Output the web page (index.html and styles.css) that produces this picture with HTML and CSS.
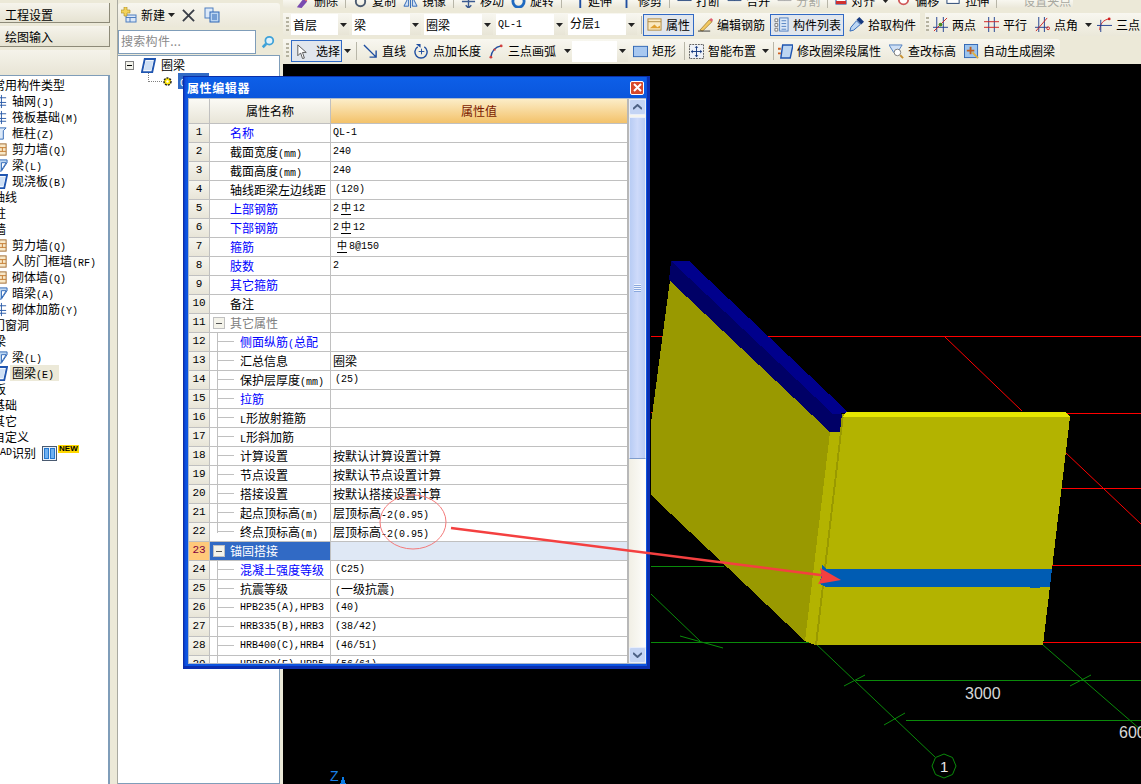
FILE: index.html
```html
<!DOCTYPE html>
<html lang="zh">
<head>
<meta charset="utf-8">
<title>属性编辑器</title>
<link rel="stylesheet" href="styles.css">
</head>
<body>
<svg class="defs" width="0" height="0">
  <symbol id="i-para" viewBox="0 0 16 16"><path d="M4 1h11l-3 14H1z" fill="#fff" stroke="#1f55b0" stroke-width="2"/><path d="M5 3h8l-2 10H3z" fill="#cfe0f5"/></symbol>
  <symbol id="i-beam" viewBox="0 0 16 16"><path d="M1 6l5-4h9v3l-6 9H2z" fill="#bcd6f2" stroke="#2f66b5"/><path d="M9 5l5 0-5 8z" fill="#fff" stroke="#2f66b5"/></symbol>
  <symbol id="i-wall" viewBox="0 0 16 16"><rect x="1" y="2" width="13" height="12" fill="#f8e8c8" stroke="#a06a30"/><path d="M1 6h13M1 10h13M7 2v4M10 6v4M6 10v4" stroke="#c47b30"/></symbol>
  <symbol id="i-grid" viewBox="0 0 16 16"><path d="M4 1v14M9 1v14M1 4h13M1 9h13M1 12h13" stroke="#2a5aa8" fill="none"/></symbol>
  <symbol id="i-col" viewBox="0 0 16 16"><path d="M1 2h13l-3 3v9H5V5z" fill="#dce9f8" stroke="#2f66b5"/></symbol>
  <symbol id="i-down" viewBox="0 0 7 4"><path d="M0 0h7L3.500 4z" fill="#222"/></symbol>
</svg>

<div class="page">
  <aside class="nav">
    <div class="nav-btn first">工程设置</div>
    <div class="nav-btn">绘图输入</div>
    <div class="nav-head"></div>
    <div class="nav-tree">
      <div class="cat">常用构件类型</div>
      <div class="leaf"><svg class="ti"><use href="#i-grid"/></svg>轴网<span class="m">(J)</span></div>
      <div class="leaf"><svg class="ti"><use href="#i-grid"/></svg>筏板基础<span class="m">(M)</span></div>
      <div class="leaf"><svg class="ti"><use href="#i-col"/></svg>框柱<span class="m">(Z)</span></div>
      <div class="leaf"><svg class="ti"><use href="#i-wall"/></svg>剪力墙<span class="m">(Q)</span></div>
      <div class="leaf"><svg class="ti"><use href="#i-beam"/></svg>梁<span class="m">(L)</span></div>
      <div class="leaf"><svg class="ti"><use href="#i-para"/></svg>现浇板<span class="m">(B)</span></div>
      <div class="cat">轴线</div>
      <div class="cat c2">柱</div>
      <div class="cat c2">墙</div>
      <div class="leaf"><svg class="ti"><use href="#i-wall"/></svg>剪力墙<span class="m">(Q)</span></div>
      <div class="leaf"><svg class="ti"><use href="#i-wall"/></svg>人防门框墙<span class="m">(RF)</span></div>
      <div class="leaf"><svg class="ti"><use href="#i-wall"/></svg>砌体墙<span class="m">(Q)</span></div>
      <div class="leaf"><svg class="ti"><use href="#i-beam"/></svg>暗梁<span class="m">(A)</span></div>
      <div class="leaf"><svg class="ti"><use href="#i-grid"/></svg>砌体加筋<span class="m">(Y)</span></div>
      <div class="cat">门窗洞</div>
      <div class="cat c2">梁</div>
      <div class="leaf"><svg class="ti"><use href="#i-beam"/></svg>梁<span class="m">(L)</span></div>
      <div class="leaf lit"><svg class="ti"><use href="#i-para"/></svg>圈梁<span class="m">(E)</span></div>
      <div class="cat c2">板</div>
      <div class="cat">基础</div>
      <div class="cat">其它</div>
      <div class="cat">自定义</div>
      <div class="cat cad"><span class="m">CAD</span>识别<svg class="cad-ic" viewBox="0 0 15 15"><rect x=".5" y=".5" width="14" height="14" fill="#e8f0fa" stroke="#4a5a70"/><rect x="2.500" y="2.500" width="4" height="10" fill="#6fb0f0" stroke="#2478d0"/><rect x="8.500" y="2.500" width="4" height="10" fill="#6fb0f0" stroke="#2478d0"/></svg><span class="new">NEW</span></div>
    </div>
  </aside>

  <section class="comp">
    <div class="comp-bar">
      <svg class="ic" viewBox="0 0 16 16"><rect x="5" y="8" width="10" height="7" fill="#dbe7f7" stroke="#4f7fc0"/><path d="M5 10.500h10M9 10.500V15" stroke="#4f7fc0"/><path d="M3 0h3v3h3v3H6v3H3V6H0V3h3z" fill="#f3d25a" stroke="#a88a20" stroke-width=".6"/></svg>
      <span>新建</span><svg class="caret"><use href="#i-down"/></svg>
      <svg class="ic x" viewBox="0 0 14 14"><path d="M1 1l12 12M13 1L1 13" stroke="#3a3f48" stroke-width="2"/></svg>
      <svg class="ic cp" viewBox="0 0 16 16"><rect x="1" y="1" width="8" height="10" fill="#dce9f8" stroke="#4f7fc0"/><rect x="6" y="5" width="9" height="10" fill="#bcd6f2" stroke="#2f66b5"/><path d="M8 8h5M8 10h5M8 12h5" stroke="#2f66b5"/></svg>
    </div>
    <div class="search-row">
      <div class="search">搜索构件...</div>
      <div class="search-btn"><svg viewBox="0 0 16 16"><circle cx="9.500" cy="6.500" r="4.500" fill="#e0f2fb" stroke="#3fa2d8" stroke-width="2"/><path d="M6 10l-4 4" stroke="#3fa2d8" stroke-width="3"/></svg></div>
    </div>
    <div class="comp-tree">
      <div class="node"><span class="toggle"></span><svg class="tn"><use href="#i-para"/></svg>圈梁</div>
      <div class="node sub">
        <span class="dots"></span>
        <svg class="gear" viewBox="0 0 11 11"><circle cx="5.500" cy="5.500" r="3.500" fill="#ffe600" stroke="#222" stroke-width="1.500" stroke-dasharray="2 1"/><circle cx="5.500" cy="5.500" r="1.200" fill="#fff"/></svg>
        <span class="sel"><span class="m">QL-1</span></span>
      </div>
    </div>
  </section>

  <main class="work">
    <div class="bar bar-top">
      <div class="bar-in">
        <span class="t"><svg class="ic" viewBox="0 0 16 16"><path d="M2 14l7-9 4 3-6 7z" fill="#7a4bb0"/><path d="M9 5l3-4 3 3-3 4z" fill="#e25c6a"/></svg>删除</span><i class="sep"></i>
        <span class="t"><svg class="ic" viewBox="0 0 16 16"><circle cx="8" cy="8" r="5" fill="none" stroke="#4a5a70" stroke-width="2"/></svg>复制</span>
        <span class="t"><svg class="ic" viewBox="0 0 16 16"><path d="M8 1v14M6 3L1 13h5zM10 3l5 10h-5z" fill="#cfe0f5" stroke="#2f66b5"/></svg>镜像</span><i class="sep"></i>
        <span class="t"><svg class="ic" viewBox="0 0 16 16"><path d="M8 1v14M5 12l3 3 3-3M1 8h14" fill="none" stroke="#3a5a90" stroke-width="1.500"/></svg>移动</span>
        <span class="t"><svg class="ic" viewBox="0 0 16 16"><circle cx="8" cy="8" r="6" fill="none" stroke="#1f6ac0" stroke-width="3"/></svg>旋转</span><i class="sep"></i>
        <span class="t"><svg class="ic" viewBox="0 0 16 16"><path d="M1 4h9M12 1v14" fill="none" stroke="#1f4ea0" stroke-width="2"/></svg>延伸</span>
        <span class="t"><svg class="ic" viewBox="0 0 16 16"><path d="M1 4h14M8 1v14" fill="none" stroke="#1f4ea0" stroke-width="2"/></svg>修剪</span><i class="sep"></i>
        <span class="t"><svg class="ic" viewBox="0 0 16 16"><rect x="1" y="1" width="14" height="6" fill="#dce9f8" stroke="#2f4e80"/></svg>打断</span>
        <span class="t"><svg class="ic" viewBox="0 0 16 16"><path d="M1 1h14v6H1zM8 1v6" fill="#dce9f8" stroke="#2f4e80"/></svg>合并</span>
        <span class="t dim"><svg class="ic" viewBox="0 0 16 16"><path d="M1 1h14v6H1zM8 1v6" fill="#eee" stroke="#aaa"/></svg>分割</span><i class="sep"></i>
        <span class="t"><svg class="ic sm" viewBox="0 0 12 12"><rect x="1" y="1" width="10" height="8" fill="#fff" stroke="#1f3f90"/><rect x="1" y="6" width="10" height="3" fill="#d03030"/></svg>对齐</span><svg class="caret"><use href="#i-down"/></svg>
        <span class="t"><svg class="ic" viewBox="0 0 16 16"><circle cx="8" cy="6" r="5" fill="#fff" stroke="#d05a5a" stroke-width="2"/></svg>偏移</span>
        <span class="t"><svg class="ic" viewBox="0 0 16 16"><rect x="1" y="1" width="13" height="9" fill="#fff" stroke="#1f3f70"/></svg>拉伸</span><i class="sep"></i>
        <span class="t dim"><svg class="ic" viewBox="0 0 16 16"><path d="M1 5h14" stroke="#aaa" stroke-dasharray="2 1"/></svg>设置夹点</span>
      </div>
    </div>

    <div class="bars">
      <div class="bar bar-mid">
        <i class="grip"></i>
        <div class="combo c-first"><span>首层</span><b><svg class="caret"><use href="#i-down"/></svg></b></div>
        <div class="combo"><span>梁</span><b><svg class="caret"><use href="#i-down"/></svg></b></div>
        <div class="combo"><span>圈梁</span><b><svg class="caret"><use href="#i-down"/></svg></b></div>
        <div class="combo"><span class="m">QL-1</span><b><svg class="caret"><use href="#i-down"/></svg></b></div>
        <div class="combo"><span>分层<span class="m">1</span></span><b><svg class="caret"><use href="#i-down"/></svg></b></div>
        <i class="sep s-a"></i>
        <span class="t on attr"><svg class="ic" viewBox="0 0 16 16"><rect x="1" y="2" width="14" height="12" fill="#fbe9c0" stroke="#b08a40"/><path d="M1 5h14" stroke="#b08a40"/><path d="M3 12l5-4 3 3 3-2v3H3z" fill="#e0a030"/></svg>属性</span>
        <span class="t edit"><svg class="ic" viewBox="0 0 16 16"><path d="M2 14L12 3l3 2-10 10z" fill="#f3c860" stroke="#8a6a20" stroke-width=".7"/><path d="M12 3l2-2 2 2-1 2z" fill="#e06070"/><path d="M0 15h13" stroke="#333"/></svg>编辑钢筋</span>
        <span class="t on list"><svg class="ic" viewBox="0 0 16 16"><rect x="6" y="1" width="9" height="14" fill="#dce9f8" stroke="#4f7fc0"/><path d="M8 4h5M8 7h5M8 10h5M8 13h5" stroke="#4f7fc0"/><path d="M1 2h3v3H1zM1 7h3v3H1zM1 12h3v3H1z" fill="#fff" stroke="#777"/></svg>构件列表</span>
        <span class="t pick"><svg class="ic" viewBox="0 0 16 16"><path d="M1 15l1-4 6-7 4 4-7 6z" fill="#bcd6f2" stroke="#2f66b5"/><path d="M8 3l3-3 5 5-3 3z" fill="#163a80"/></svg>拾取构件</span>
        <div class="bar-break"></div>
        <i class="grip g2"></i>
        <span class="t draw"><svg class="ic" viewBox="0 0 16 16"><path d="M4 0v16M11 0v16M0 11h16" stroke="#1f3f90" fill="none"/><path d="M1 15L15 1" stroke="#d02020"/><circle cx="8" cy="8" r="2" fill="#4a8a20"/></svg>两点</span>
        <span class="t draw"><svg class="ic" viewBox="0 0 16 16"><path d="M5 0v16M11 0v16" stroke="#1f3f90" fill="none"/><path d="M0 5h16M0 11h16" stroke="#d02020"/></svg>平行</span>
        <span class="t draw"><svg class="ic" viewBox="0 0 16 16"><path d="M4 0v16M10 0v16M0 11h14" stroke="#1f3f90" fill="none"/><path d="M1 15L13 1" stroke="#d02020"/><circle cx="14" cy="12" r="1.500" fill="none" stroke="#d02020"/></svg>点角</span><svg class="caret c-an"><use href="#i-down"/></svg>
        <span class="t draw d3"><svg class="ic" viewBox="0 0 16 16"><path d="M3 14C3 7 7 3 13 2" stroke="#d02020" fill="none"/><path d="M0 9h16M4 3v13" stroke="#1f3f90" fill="none"/><circle cx="13" cy="2" r="1.500" fill="#d02020"/></svg>三点</span>
      </div>

      <div class="bar bar-low">
        <i class="grip"></i>
        <span class="t on choose"><svg class="ic" viewBox="0 0 16 16"><path d="M3 1l9 8H8l2 6-2 .500-2-6-3 3z" fill="#fff" stroke="#555"/></svg>选择</span><svg class="caret c-b"><use href="#i-down"/></svg><i class="sep s-b"></i>
        <span class="t"><svg class="ic" viewBox="0 0 16 16"><path d="M1 1l13 13M14 7v7H7" fill="none" stroke="#1f4ea0" stroke-width="1.500"/></svg>直线</span>
        <span class="t"><svg class="ic" viewBox="0 0 16 16"><path d="M4 3a6.500 6.500 0 1 0 7 0" fill="none" stroke="#1f4ea0" stroke-width="1.500"/><path d="M5 8h6M8 5v6" stroke="#1f4ea0"/><path d="M2 0h5v4z" fill="#1f4ea0"/></svg>点加长度</span>
        <span class="t"><svg class="ic" viewBox="0 0 16 16"><path d="M2 14C3 7 7 3 13 2" stroke="#1f4ea0" stroke-width="1.500" fill="none"/><circle cx="2" cy="14" r="1.500" fill="#d04040"/><circle cx="13" cy="2" r="1.500" fill="#d04040"/><circle cx="6" cy="6" r="1.200" fill="#d04040"/></svg>三点画弧</span><svg class="caret c-c"><use href="#i-down"/></svg>
        <div class="combo c-empty"><span></span><b><svg class="caret"><use href="#i-down"/></svg></b></div>
        <span class="t rect"><svg class="ic" viewBox="0 0 16 16"><rect x=".5" y="2.500" width="15" height="11" fill="#a8c8f0" stroke="#2f66b5"/></svg>矩形</span><i class="sep s-d"></i>
        <span class="t smart"><svg class="ic" viewBox="0 0 16 16"><rect x=".5" y=".5" width="15" height="15" fill="#eef2f8" stroke="#555" stroke-dasharray="2 1"/><path d="M8 3v10M3 8h10" stroke="#163a80"/><path d="M8 2l2 2H6zM8 14l2-2H6zM2 8l2-2v4zM14 8l-2-2v4z" fill="#163a80"/></svg>智能布置</span><svg class="caret c-e"><use href="#i-down"/></svg><i class="sep s-f"></i>
        <span class="t"><svg class="ic" viewBox="0 0 16 16"><path d="M5 1h11l-3 14H3z" fill="#bcd6f2" stroke="#1f55b0" stroke-width="1.500"/><path d="M0 4h3v2H0zM0 9h3v2H0z" fill="#d06020"/></svg>修改圈梁段属性</span>
        <span class="t"><svg class="ic" viewBox="0 0 16 16"><path d="M0 1h14L9 9H5z" fill="#cfe0f5" stroke="#4f7fc0"/><circle cx="9" cy="9" r="3.500" fill="#fff" stroke="#777"/><path d="M12 12l3 3" stroke="#c89030" stroke-width="2"/></svg>查改标高</span>
        <span class="t"><svg class="ic" viewBox="0 0 16 16"><rect x=".5" y=".5" width="14" height="14" fill="#9cc4ee" stroke="#2f66b5"/><path d="M7 3v8M3 7h8" stroke="#c06020" stroke-width="2"/><path d="M9 9l6 6" stroke="#e0b040" stroke-width="2"/></svg>自动生成圈梁</span>
      </div>
    </div>

    <svg class="scene" viewBox="283 64 858 720" shape-rendering="crispEdges">
      <g stroke="#f00" fill="none" shape-rendering="auto">
        <path d="M651 336.500H662M768 336.500H1141M651 412.500H656M1066 413.500H1141M945 337L1022 411M1066 453L1141 524M1061 488.500H1141M1052 565.500H1141M1043 642.500H1141"/>
      </g>
      <g stroke="#0a8a0a" fill="none" shape-rendering="auto">
        <path d="M651 566.500H724M651 642.500H815M651 594L700 641M680 636L723 648M815 643L935 757M1043 645L1141 730M856 680.500H1141M844 686L865 675M1070 686L1091 675M906 720.500H1141M884 725L905 713"/>
        <path d="M944 754l8.500 3.500 3.500 8.500-3.500 8.500-8.500 3.500-8.500-3.500-3.500-8.500 3.500-8.500z"/>
      </g>
      <polygon points="670,280 830,432 805,641 651,495 651,423" fill="#999900"/>
      <polygon points="830,432 840,432 815,645 805,641" fill="#b3b300"/>
      <polygon points="840,432 842,414 844,414 817,645 815,645" fill="#999900"/>
      <polygon points="671,261 669,280 830,432 840,432 842,414 833,414" fill="#000066"/>
      <polygon points="671,261 689,261 849,413 833,414" fill="#00008c"/>
      <polygon points="844,414 1070,417 1043,645 817,645" fill="#b3b300"/>
      <polygon points="846,412 1065,412 1070,417 843,417" fill="#e6e600"/>
      <polygon points="822,565 826,569 1052,569 1050,587 1030,588 1030,587 826,587 820,584" fill="#005cb3"/>
      <g class="dim-t">
        <text x="965" y="699">3000</text>
        <text x="1119" y="738">600</text>
        <text x="940" y="772" class="num">1</text>
      </g>
      <text x="330" y="781" class="zed">Z</text>
      <polygon points="343,776 346,784 340,784" fill="#0a7be6"/>
    </svg>
  </main>

  <div class="dlg">
    <div class="dlg-title"><span>属性编辑器</span><b class="close"><svg viewBox="0 0 9 9"><path d="M1 1l7 7M8 1L1 8" stroke="#fff" stroke-width="2"/></svg></b></div>
    <div class="dlg-body">
      <div class="grid">
        <div class="row head"><div class="idx"></div><div class="nm">属性名称</div><div class="val">属性值</div></div>
        <div class="row"><div class="idx">1</div><div class="nm blue">名称</div><div class="val m">QL-1</div></div>
        <div class="row"><div class="idx">2</div><div class="nm">截面宽度<span class="m">(mm)</span></div><div class="val m">240</div></div>
        <div class="row"><div class="idx">3</div><div class="nm">截面高度<span class="m">(mm)</span></div><div class="val m">240</div></div>
        <div class="row"><div class="idx">4</div><div class="nm">轴线距梁左边线距</div><div class="val m p">(120)</div></div>
        <div class="row"><div class="idx">5</div><div class="nm blue">上部钢筋</div><div class="val m">2<span class="rb">中</span>12</div></div>
        <div class="row"><div class="idx">6</div><div class="nm blue">下部钢筋</div><div class="val m">2<span class="rb">中</span>12</div></div>
        <div class="row"><div class="idx">7</div><div class="nm blue">箍筋</div><div class="val m p"><span class="rb">中</span>8@150</div></div>
        <div class="row"><div class="idx">8</div><div class="nm blue">肢数</div><div class="val m">2</div></div>
        <div class="row"><div class="idx">9</div><div class="nm blue">其它箍筋</div><div class="val"></div></div>
        <div class="row"><div class="idx">10</div><div class="nm">备注</div><div class="val"></div></div>
        <div class="row"><div class="idx">11</div><div class="nm gray"><span class="box"></span>其它属性</div><div class="val"></div></div>
        <div class="row"><div class="idx">12</div><div class="nm kid blue">侧面纵筋<span class="m">(</span>总配</div><div class="val"></div></div>
        <div class="row"><div class="idx">13</div><div class="nm kid">汇总信息</div><div class="val">圈梁</div></div>
        <div class="row"><div class="idx">14</div><div class="nm kid">保护层厚度<span class="m">(mm)</span></div><div class="val m p">(25)</div></div>
        <div class="row"><div class="idx">15</div><div class="nm kid blue">拉筋</div><div class="val"></div></div>
        <div class="row"><div class="idx">16</div><div class="nm kid"><span class="m">L</span>形放射箍筋</div><div class="val"></div></div>
        <div class="row"><div class="idx">17</div><div class="nm kid"><span class="m">L</span>形斜加筋</div><div class="val"></div></div>
        <div class="row"><div class="idx">18</div><div class="nm kid">计算设置</div><div class="val">按默认计算设置计算</div></div>
        <div class="row"><div class="idx">19</div><div class="nm kid">节点设置</div><div class="val">按默认节点设置计算</div></div>
        <div class="row"><div class="idx">20</div><div class="nm kid">搭接设置</div><div class="val">按默认搭接设置计算</div></div>
        <div class="row"><div class="idx">21</div><div class="nm kid">起点顶标高<span class="m">(m)</span></div><div class="val">层顶标高<span class="m">-2(0.95)</span></div></div>
        <div class="row"><div class="idx">22</div><div class="nm kid last">终点顶标高<span class="m">(m)</span></div><div class="val">层顶标高<span class="m">-2(0.95)</span></div></div>
        <div class="row cur"><div class="idx">23</div><div class="nm"><span class="box"></span>锚固搭接</div><div class="val"></div></div>
        <div class="row"><div class="idx">24</div><div class="nm kid blue">混凝土强度等级</div><div class="val m p">(C25)</div></div>
        <div class="row"><div class="idx">25</div><div class="nm kid">抗震等级</div><div class="val p"><span class="m">(</span>一级抗震<span class="m">)</span></div></div>
        <div class="row"><div class="idx">26</div><div class="nm kid m">HPB235(A),HPB3</div><div class="val m p">(40)</div></div>
        <div class="row"><div class="idx">27</div><div class="nm kid m">HRB335(B),HRB3</div><div class="val m p">(38/42)</div></div>
        <div class="row"><div class="idx">28</div><div class="nm kid m">HRB400(C),HRB4</div><div class="val m p">(46/51)</div></div>
        <div class="row"><div class="idx">29</div><div class="nm kid m">HRB500(E),HRB5</div><div class="val m p">(56/61)</div></div>
      </div>
      <div class="sb">
        <div class="sb-btn"><svg viewBox="0 0 9 6"><path d="M0 5l4.500-4 4.500 4" fill="none" stroke="#4d6185" stroke-width="2"/></svg></div>
        <div class="sb-thumb"><i></i></div>
        <div class="sb-track"></div>
        <div class="sb-btn"><svg viewBox="0 0 9 6"><path d="M0 1l4.500 4 4.500-4" fill="none" stroke="#4d6185" stroke-width="2"/></svg></div>
      </div>
    </div>
  </div>

  <svg class="marks" viewBox="0 0 1141 784">
    <ellipse cx="413" cy="522" rx="33" ry="27" fill="none" stroke="#f47a7a"/>
    <path d="M451 528L828 576" stroke="#f44040" stroke-width="2.500" fill="none"/>
    <path d="M841 580L820 568 822 577 818 584z" fill="#f44040"/>
  </svg>
</div>
</body>
</html>
```
FILE: styles.css
```css
* { box-sizing: border-box; }
html, body { margin: 0; padding: 0; }
body { background: #ece9d8; font: 12px/16px "Noto Sans CJK SC", "Noto Sans", sans-serif; color: #000; }
.defs { position: absolute; }
.m { font-family: "Liberation Mono", "Noto Sans CJK SC", monospace; font-size: 10px; }
.page { position: relative; width: 1141px; height: 784px; overflow: hidden; display: flex; background: #ece9d8; }

/* left nav */
.nav { width: 110px; flex: none; display: flex; flex-direction: column; }
.nav-btn { height: 21px; margin-bottom: 3px; padding-left: 5px; line-height: 22px; font-size: 12px; background: linear-gradient(#f6f4ec, #e6e3d2); border-right: 1px solid #8d8a78; border-bottom: 1px solid #8d8a78; }
.nav-btn.first { margin-top: 3px; height: 20px; line-height: 23px; }
.nav-head { height: 25px; flex: none; background: linear-gradient(#f5f3ea, #e8e5d6); }
.nav-tree { flex: 1; padding-top: 1px; background: #fff; border-top: 1px solid #7f9db9; border-right: 2px solid #7f9db9; overflow: hidden; }
.cat, .leaf { height: 16px; line-height: 16px; white-space: nowrap; }
.cat { margin-left: -7px; }
.cat.c2 { margin-left: -6px; }
.cat.cad { margin-left: -6px; display: flex; align-items: center; }
.leaf { margin-left: -7px; }
.ti { width: 15px; height: 15px; margin-right: 4px; vertical-align: -3px; }
.lit { background: linear-gradient(#ece9d8, #ece9d8) 17px 0 / 49px 100% no-repeat; }
.cad-ic { width: 15px; height: 15px; margin-left: 6px; flex: none; }
.new { background: #ffd800; font: bold 8px/7px "Liberation Sans", sans-serif; height: 8px; padding: 0 1px; margin: -8px 0 0 1px; }

/* component panel */
.comp { width: 166px; flex: none; margin-left: 7px; display: flex; flex-direction: column; padding-right: 3px; border-left: 1px solid #a9a9a0; }
.comp-bar { height: 24px; margin: 3px 0; flex: none; display: flex; align-items: center; padding-left: 3px; background: linear-gradient(#f7f6ef, #ebe8d9); border-radius: 3px; }
.comp-bar .ic { width: 16px; height: 16px; flex: none; }
.comp-bar span { margin-left: 4px; }
.caret { width: 7px; height: 4px; flex: none; }
.comp-bar .caret { margin-left: 3px; }
.comp-bar .x { width: 13px; height: 13px; margin-left: 7px; }
.comp-bar .cp { margin-left: 9px; }
.search-row { height: 25px; flex: none; display: flex; align-items: flex-start; background: #ece9d8; }
.search { width: 138px; height: 24px; background: #fff; border: 1px solid #7f9db9; color: #8a8a8a; line-height: 19px; padding-left: 2px; letter-spacing: .3px; }
.search-btn { width: 14px; height: 14px; margin: 5px 0 0 5px; }
.search-btn svg { display: block; width: 14px; height: 14px; }
.comp-tree { flex: 1; background: #fff; border: 1px solid #7f9db9; border-left: 0; position: relative; }
.node { height: 16px; display: flex; align-items: center; margin-top: 1px; padding-left: 7px; }
.toggle { width: 9px; height: 9px; flex: none; border: 1px solid #808080; background: linear-gradient(#000, #000) center / 5px 1px no-repeat, #f2f2ea; }
.tn { width: 15px; height: 15px; flex: none; margin: 0 5px 0 7px; }
.node.sub { margin-top: 0; padding-left: 30px; }
.dots { width: 14px; height: 9px; flex: none; margin-top: -8px; border-left: 1px dotted #808080; border-bottom: 1px dotted #808080; }
.gear { width: 11px; height: 11px; flex: none; }
.sel { width: 31px; height: 16px; flex: none; margin-left: 5px; background: #316ac5; color: #fff; padding-left: 2px; }

/* work area */
.work { flex: 1; min-width: 0; display: flex; flex-direction: column; }
.bar { display: flex; align-items: center; background: linear-gradient(#f8f7f0, #ebe8d9); }
.bar-top { width: 790px; height: 8px; overflow: hidden; align-items: flex-start; border-radius: 0 0 3px 3px; }
.bar-in { display: flex; align-items: center; height: 16px; margin-top: -7px; padding-left: 12px; gap: 7px; white-space: nowrap; }
.t { display: flex; align-items: center; gap: 4px; white-space: nowrap; flex: none; }
.t .ic { width: 15px; height: 15px; flex: none; }
.t .ic.sm { width: 12px; height: 12px; }
.dim { color: #a8a8a0; }
.sep { width: 1px; height: 18px; background: #b8b6a8; flex: none; }
.bars { display: flex; flex-direction: column; gap: 3px; margin-top: 5px; }
.bar-mid { height: 23px; padding-left: 3px; }
.bar-low { height: 24px; padding-left: 3px; gap: 8px; width: 777px; border-radius: 0 3px 3px 0; }
.grip { width: 3px; height: 16px; flex: none; background: repeating-linear-gradient(#b5b2a0 0 2px, transparent 2px 4px); }
.combo { width: 69px; height: 21px; margin-left: 3px; background: #fff; display: flex; flex: none; align-items: center; justify-content: space-between; padding-left: 2px; font-size: 12px; }
.combo b { width: 11px; height: 21px; background: linear-gradient(#f7f6ef, #e8e5d6); display: flex; align-items: center; justify-content: center; font-weight: normal; }
.c-first { width: 58px; margin-left: 2px; }
.c-empty { width: 56px; margin-left: 0; }
.s-a { margin-left: 4px; margin-right: 1px; }
.on { background: #e1e6ed; border: 1px solid #316ac5; height: 22px; }
.attr { width: 51px; padding-left: 3px; }
.edit { margin-left: 4px; width: 71px; }
.list { margin-left: 1px; width: 74px; padding-left: 3px; }
.pick { margin-left: 5px; width: 68px; }
.bar-break { width: 5px; height: 23px; background: #ece9d8; margin-left: 3px; flex: none; }
.g2 { margin-left: 1px; }
.draw { margin-left: 8px; }
.g2 + .draw { margin-left: 4px; }
.c-an { margin-left: 7px; }
.d3 { margin-left: 5px; }
.choose { width: 51px; gap: 6px; padding-left: 3px; margin-left: -6px; margin-right: -6px; }
.c-b { margin-left: 0; margin-right: -3px; }
.s-b { margin-right: -2px; }
.c-c { margin-left: 0; margin-right: -7px; }
.rect { margin-left: -3px; }
.s-d { margin-left: 0; margin-right: -4px; }
.c-e { margin-left: -2px; }
.s-f { margin-left: -4px; margin-right: -4px; }
.scene { flex: none; width: 858px; height: 720px; background: #000; margin-top: 1px; display: block; }
.dim-t text { fill: #d8d8d8; font: 16px "Liberation Sans", sans-serif; }
.dim-t text.num { fill: #e8e8e8; font-size: 15px; }
.zed { fill: #1a80e8; font: 14px "Liberation Sans", sans-serif; }

/* dialog */
.dlg { position: absolute; left: 183px; top: 76px; width: 467px; height: 593px; background: linear-gradient(90deg, #0a39c8, #0d54e0 2px, #0d54e0 100%); border: 1px solid #0a2fa8; border-right: 3px solid #0a2fb0; border-bottom: 3px solid #0a2fb0; display: flex; flex-direction: column; padding: 0 1px 2px 4px; }
.dlg-title { height: 21px; flex: none; display: flex; align-items: center; justify-content: space-between; color: #fff; font-weight: bold; padding: 0 2px 0 0; background: linear-gradient(#0d5fe8, #0a56dc); }
.dlg-title span { letter-spacing: .6px; margin-left: -1px; }
.close { width: 14px; height: 14px; background: #d8492a; border: 1px solid #fff; border-radius: 2px; display: flex; align-items: center; justify-content: center; }
.close svg { width: 9px; height: 9px; }
.dlg-body { flex: 1; min-height: 0; display: flex; background: #fff; border: 1px solid #aeb9c8; border-right: 0; }
.grid { width: 440px; flex: none; overflow: hidden; border-right: 2px solid #b8b8b8; }
.row { display: grid; grid-template-columns: 21px 121px 1fr; height: 19px; line-height: 17px; border-bottom: 1px solid #c0c0c0; }
.row > div { border-right: 1px solid #c0c0c0; white-space: nowrap; overflow: hidden; }
.row .val { border-right: 0; padding-left: 2px; }
.val.m, .nm.m { font-size: 10px; line-height: 18px; }
.val.p { padding-left: 4px; }
.idx { background: linear-gradient(#f6f5ee, #e8e5d8); text-align: center; font: 11px/17px "Liberation Mono", monospace; }
.nm { padding-left: 20px; position: relative; }
.nm.blue, .nm.kid.blue { color: #0000ff; }
.nm.gray { color: #808080; }
.nm.kid { padding-left: 30px; }
.nm.kid::before { content: ""; position: absolute; left: 7px; top: -1px; bottom: 0; width: 16px; border-left: 1px solid #c0c0c0; background: linear-gradient(#c0c0c0, #c0c0c0) 0 9px / 100% 1px no-repeat; }
.nm.kid.last::before { bottom: 8px; }
.box { position: absolute; left: 3px; top: 3px; width: 12px; height: 12px; border: 1px solid #c0c0c0; background: linear-gradient(#555, #555) center / 6px 1px no-repeat, #f4f3ea; }
.head { height: 25px; line-height: 24px; }
.head .idx { line-height: 24px; background: linear-gradient(#fbfaf5, #e8e5d8); }
.head .nm { background: linear-gradient(#fbfaf5, #e8e5d8); text-align: center; padding-left: 0; }
.head .val { background: linear-gradient(#fcedc8, #f3c26a); text-align: center; padding-left: 0; color: #7a1a00; }
.cur .idx { background: #ffc97a; color: #800040; }
.cur .nm { background: #316ac5; color: #fff; }
.cur .val { background: #dfe8f5; }
.rb { font: 10px/10px "Noto Sans CJK SC", sans-serif; border-bottom: 1px solid #000; margin: 0 2px; }
.sb { width: 17px; flex: none; display: flex; flex-direction: column; background: #f5f4ee; }
.sb-btn { height: 16px; flex: none; background: #c4d4f4; border: 1px solid #e8eefb; border-radius: 2px; display: flex; align-items: center; justify-content: center; }
.sb-btn svg { width: 9px; height: 6px; }
.sb-thumb { height: 342px; flex: none; margin-top: 2px; background: linear-gradient(90deg, #b8ccf4, #cedafa 50%, #b8ccf4); border: 1px solid #e8eefb; border-bottom-color: #7f9ccc; display: flex; align-items: center; justify-content: center; }
.sb-thumb i { width: 7px; height: 8px; background: repeating-linear-gradient(#eef3fd 0 1px, #8aa8de 1px 2px); }
.sb-track { flex: 1; background: linear-gradient(90deg, #f1efe5, #fdfdfb); }

/* annotations */
.marks { position: absolute; left: 0; top: 0; width: 1141px; height: 784px; pointer-events: none; }
```
